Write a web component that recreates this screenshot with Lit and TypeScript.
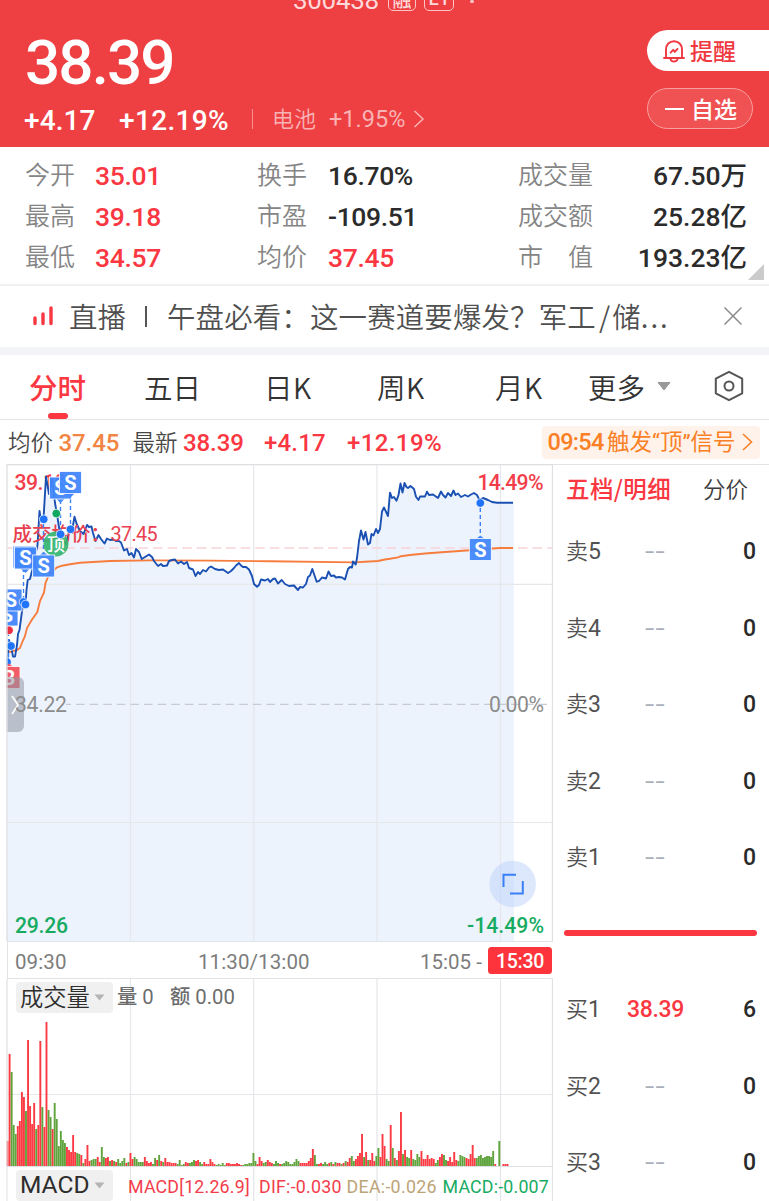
import { LitElement, html, svg, css } from "lit";
import { customElement, property } from "lit/decorators.js";
import { classMap } from "lit/directives/class-map.js";

const PRICE_POINTS =
  "7.5,662 9,640 11,646 13,656.6 15,656.6 17,645 18,634 19.5,630 22.7,606 25.5,604 26.5,590 27.7,580 30,579 32,571 35,556 37.5,545 39.5,511 41,521 43.5,519 46,476.5 49,494 52,479 55,503 57,514 60,534 63,540 66,544 70,529 72,531 74.5,516.7 76.7,524 80,531 83.5,534 87,525 89,527 91.5,526.5 93,533 95.5,541 98.5,535 101,539 104.5,543.5 107,538.5 110,540 113,539.5 116,541 119,541 121,542.5 124,550.5 127,549 129,555 131.5,553 134,557.5 136,549 139,552 141.7,559 145,557 149,554.5 152,557 154,561 158,566 161,564 163,566 167,565.5 169,561 172,560 175,559.5 178,563.5 181,561.5 184,564 187,562 189,568 193,569.5 195.5,576 198,572 200,574 203,570 206,571.5 209,567.5 211,566.5 215,569 219,570 223,569.5 228,573 231,571 234,568 236,565.5 239,563 241,565.5 243,567 246,567 249,569.5 252,576 254,584 257,586.8 259,585 261,579.5 265,580.5 268,579 270,582 273,579 275,578.5 278,583.5 281.7,580 285,584 289,586 294,585.5 298,590 300,587 303,587.5 306,584 308,577 310,575.5 312.3,569 316.7,581.7 319,581 322,577.5 326,578.5 328.5,571.5 331,576 334,575.5 336,577.5 339,577 342,577.5 345,579.5 348,569 350,567 352,567.5 353,561.5 355.7,564.5 357,558 359,541 361,530.5 363.5,539.5 365.5,532 368,544.5 370,543 371.5,534 373.5,535.5 376,529 378,533 380,529 382,511.5 384,507.5 388,516 390,492.7 392,498 394,497 396.5,500.7 398.5,495 400.5,483.5 402.5,492.5 404.5,483 406.5,487 408,488 410.5,486 414,489 416,496.7 418.5,500 420,496.5 425,496.5 427,491.7 429,495 433,494.5 438,498 441,491.5 443,495 445.5,497.5 448,493 451,496 453.5,490.5 455.5,495 458,493.5 461,497 465,495 468,496.5 471,494.5 474,493 477,495 479.5,500 483,498 488,500 492,502 497,502.7 513,502.7";

const AVERAGE_POINTS =
  "9,652 17,650 20,648 22.7,641 25,636 27,628 31.7,620 37.3,612 40,601 44,592.5 45.5,583 48,577 51,573 56.7,567.5 62,565.7 70,564.2 80,562.7 110,561 150,560.4 210,560.6 270,561.3 355,562.4 365,561.8 378,561 385,559.5 390,558.8 398,557.4 401,556.2 410,555 425,553.5 445,552 470,550.3 490,548.7 500,548 513,548";

const VOLUME_BARS =
  "r25 r112 g94 g41 g32 r40 r45 r74 r69 g55 r126 r60 r42 r63 g37 r41 r125 g59 r39 r144 g56 g49 r37 g63 g47 g20 g35 g26 g23 r19 r16 r14 r31 r14 g13 g12 r11 g3 r7 r21 r5 g6 g7 g7 r9 r4 g19 g9 r8 r9 g5 r6 g5 r4 g7 g3 g5 g8 r3 g4 r13 r7 g9 g7 g4 g4 g4 r9 r5 r3 r4 g2 g8 r6 g11 r5 g4 r8 r4 r4 r3 r3 r3 g2 g6 g1 g2 r4 r3 g3 g4 g6 r5 r6 g4 g2 r4 r2 r2 r7 r4 r2 g1 g2 g1 g3 g1 r3 r3 r2 r2 r2 r3 r2 r1 g1 g2 g2 g3 g3 g13 g5 r2 r9 r5 g3 g4 r6 r4 r3 g2 g5 g3 r2 g2 g3 g5 g4 g2 g2 g4 g7 g5 r3 r3 r3 r3 r5 r8 r17 g11 g2 r2 r3 g2 g4 g2 r3 g4 r2 g4 r3 r3 g2 r3 g5 r4 r8 g10 g5 r7 r10 r13 r32 g9 r14 g6 r6 r13 r5 g10 g18 r9 r32 r20 g7 g5 r41 g18 r8 g6 r15 r54 g12 r16 g9 g8 r16 g7 g6 g12 g9 r15 r7 r7 r11 r7 r8 r7 g3 g6 r9 r12 g11 g6 r5 r9 r4 r14 r6 g5 g11 g10 g9 r8 r7 r12 r21 r8 g8 g10 g11 g8 g9 g10 g10 g9 g15 r2 n0 g25 n0 r2 r2 r2"
    .split(" ")
    .map((t) => ({ tone: t[0], size: Number(t.slice(1)) }));

const DIGITS = css`Roboto, "Noto Sans CJK SC", sans-serif`;
const HANZI = css`"Noto Sans CJK SC", Roboto, sans-serif`;

@customElement("quote-header")
class QuoteHeader extends LitElement {
  static styles = css`
    :host { display: block; height: 147px; background: #ee4042; color: #fff; font-family: ${DIGITS}; overflow: hidden; }
    .title { display: flex; align-items: flex-end; height: 12px; padding-left: 293px; overflow: hidden; color: #ffd9d9; }
    .code { font-size: 26px; line-height: 26px; letter-spacing: -0.3px; width: 95px; height: 26px; font-weight: 450; margin-bottom: -1px; }
    .tag { box-sizing: border-box; height: 24px; border: 1.5px solid #fbc5c5; border-radius: 5px; font-size: 19px; line-height: 25px; text-align: center; margin-bottom: 1px; font-weight: 500; }
    .rz { width: 28px; margin-right: 8px; }
    .lf { width: 30px; line-height: 21px; }
    .more { width: 4px; height: 3px; border-radius: 2px; background: #fbc5c5; margin: 0 0 9px 16px; }
    .body { display: flex; justify-content: space-between; height: 135px; }
    .left { padding: 13px 0 0 25px; }
    .price { font-size: 62px; line-height: 75px; font-weight: 500; letter-spacing: -1.9px; }
    .change { display: flex; align-items: center; height: 40px; font-size: 28px; font-weight: 500; margin-left: -1px; }
    .amount { width: 95px; letter-spacing: 0.1px; }
    .percent { width: 133px; letter-spacing: 0.35px; }
    .sector { display: flex; align-items: center; color: #f9b3b4; font-size: 22px; font-weight: 350; border-left: 1.5px solid #f59091; height: 20px; padding-left: 19px; margin-top: -3px; }
    .sector span { width: 57px; margin-top: -3px; }
    .sector b { font-weight: 400; font-size: 23.5px; letter-spacing: 0; width: 84px; }
    .actions { display: flex; flex-direction: column; align-items: flex-start; width: 122px; padding-top: 18px; gap: 17px; font-family: ${HANZI}; font-size: 23px; line-height: 36px; font-weight: 500; }
    .remind { display: flex; align-items: center; box-sizing: border-box; width: 122px; height: 41px; background: #fff; color: #f03840; border-radius: 21px 0 0 21px; padding-left: 15px; gap: 4px; }
    .watch { display: flex; align-items: center; box-sizing: border-box; width: 106px; height: 41px; border: 1.2px solid #f8a0a1; border-radius: 21px; background: #f05153; padding-left: 17px; gap: 7px; }
    .actions span { margin-top: -2px; }
    .dash { width: 19px; height: 2px; background: #fff; }
  `;
  render() {
    return html`
      <div class="title"><span class="code">300438</span><span class="tag rz">融</span><span class="tag lf">L1</span><i class="more"></i></div>
      <div class="body">
        <div class="left">
          <div class="price">38.39</div>
          <div class="change">
            <span class="amount">+4.17</span><span class="percent">+12.19%</span>
            <div class="sector"><span>电池</span><b>+1.95%</b>
              <svg width="12" height="20" viewBox="0 0 12 20" fill="none" stroke="#f9b3b4" stroke-width="1.5"><path d="M1.5 2L10 10L1.5 18" /></svg>
            </div>
          </div>
        </div>
        <div class="actions">
          <div class="remind">
            <svg width="24" height="24" viewBox="0 0 24 24" fill="none" stroke="#f03840" stroke-width="1.9" stroke-linejoin="round" stroke-linecap="round">
              <path d="M2 19H22M4 19V10.5C4 5.5 7.5 2.2 12 2.2S20 5.5 20 10.5V19M8.5 20.2C9.5 23.3 14.5 23.3 15.500 20.200" />
              <path d="M8.600 13.600L11.200 10.800L12.800 12.800L15.500 10" />
            </svg><span>提醒</span>
          </div>
          <div class="watch"><i class="dash"></i><span>自选</span></div>
        </div>
      </div>`;
  }
}

@customElement("quote-stats")
class QuoteStats extends LitElement {
  static styles = css`
    :host { display: block; position: relative; box-sizing: border-box; height: 139px; padding: 7px 0 0 25px; border-bottom: 2px solid #f0f0f0; }
    .grid { display: grid; grid-template-columns: 70px 162px 71px 190px 100px 129px; grid-auto-rows: 41px; align-items: center; }
    .label { font: 350 25px/38px ${HANZI}; color: #858585; white-space: pre; padding-bottom: 3px; }
    .value { font: 500 26.5px/41px ${DIGITS}; color: #2b2b2b; letter-spacing: -0.35px; padding-top: 1px; }
    .up { color: #fb3742; }
    .end { text-align: right; letter-spacing: 0; }
    .corner { position: absolute; right: 5px; bottom: 4px; }
  `;
  rows = [
    ["今开", "35.01", "换手", "16.70%", "成交量", "67.50万"],
    ["最高", "39.18", "市盈", "-109.51", "成交额", "25.28亿"],
    ["最低", "34.57", "均价", "37.45", "市\u3000值", "193.23亿"],
  ];
  render() {
    return html`<div class="grid">
        ${this.rows.map((r, n) =>
          r.map((t, i) =>
            i % 2 === 0
              ? html`<span class="label">${t}</span>`
              : html`<span class=${classMap({ value: true, up: i === 1 || (i === 3 && n === 2), end: i === 5 })}>${t}</span>`
          )
        )}
      </div>
      <svg class="corner" width="16" height="16"><path d="M16 0V16H0Z" fill="#cbcbcb" /></svg>`;
  }
}

@customElement("live-ticker")
class LiveTicker extends LitElement {
  static styles = css`
    :host { display: flex; align-items: center; box-sizing: border-box; height: 69px; padding: 0 0 1px 32px; border-bottom: 8px solid #f2f4f8; font: 350 28.4px/58px ${HANZI}; color: #4f4f4f; white-space: nowrap; }
    .live { width: 76px; margin-left: 14px; }
    .bar { width: 2px; height: 21px; background: #555; margin-right: 20px; }
    .text { width: 557px; letter-spacing: 0.2px; }
    .slash { padding: 0 2px 0 3px; }
    .dots { letter-spacing: 2px; }
  `;
  render() {
    return html`
      <svg width="23" height="22" stroke="#fb3742" stroke-width="3.4" stroke-linecap="round"><path d="M3 13V18.500M11 9V18.500M19 3V18.500" /></svg>
      <span class="live">直播</span><i class="bar"></i>
      <span class="text">午盘必看：这一赛道要爆发？军工<span class="slash">/</span>储<span class="dots">...</span></span>
      <svg width="18" height="18" stroke="#8b8b8b" stroke-width="1.5"><path d="M0.500 0.500L17.500 17.500M17.500 0.500L0.500 17.500" /></svg>`;
  }
}

@customElement("period-tabs")
class PeriodTabs extends LitElement {
  static styles = css`
    :host { display: flex; box-sizing: border-box; height: 65px; border-bottom: 1.500px solid #e4e4e4; padding-left: 29px; font: 350 28.500px/63px ${HANZI}; color: #333; }
    .tab { display: flex; flex-direction: column; }
    .on { color: #fb3742; font-weight: 500; }
    .mark { width: 20px; height: 6px; border-radius: 3px; background: #fb3742; margin: -5px 0 0 19px; }
    .w0 { width: 115px; } .w1 { width: 120px; } .w2 { width: 113px; } .w3 { width: 118px; } .w4 { width: 93px; } .w5 { width: 69px; }
    .w2, .w3, .w4 { letter-spacing: 0.5px; }
    .tools { display: flex; align-items: center; gap: 43px; height: 62px; }
  `;
  render() {
    return html`
      ${["分时", "五日", "日K", "周K", "月K", "更多"].map(
        (t, i) => html`<div class="tab w${i} ${i === 0 ? "on" : ""}"><span>${t}</span>${i === 0 ? html`<i class="mark"></i>` : ""}</div>`
      )}
      <div class="tools">
        <svg width="14" height="9"><path d="M1 0.500H13L7 8Z" fill="#999" stroke="#999" stroke-linejoin="round" /></svg>
        <svg width="30" height="32" viewBox="0 0 30 32" fill="none" stroke="#555" stroke-width="2" stroke-linejoin="round">
          <path d="M15 1.800L28.200 8.700V23.300L15 30.200L1.800 23.300V8.700Z" /><circle cx="15" cy="16" r="4.500" />
        </svg>
      </div>`;
  }
}

@customElement("quote-summary")
class QuoteSummary extends LitElement {
  static styles = css`
    :host { display: flex; align-items: center; height: 44px; padding-left: 8px; font: 500 24px/42px ${DIGITS}; letter-spacing: -0.1px; color: #fb3742; white-space: nowrap; }
    :host > span { padding-top: 2px; }
    :host > .label { font: 350 22.500px/40px ${HANZI}; letter-spacing: 0; color: #484848; width: 50.5px; padding: 0 0 3px; }
    .avg { color: #f08544; width: 74px; }
    .last { width: 81px; }
    .diff { width: 83px; letter-spacing: 0.2px; }
    .pct { width: 194.5px; letter-spacing: 0.400px; }
    .signal { display: flex; align-items: center; box-sizing: border-box; height: 33px; width: 218px; background: #fef2ea; border-radius: 4px; padding: 0 7px 0 6px; color: #fa7f25; font: 400 22.5px/33px ${DIGITS}; justify-content: space-between; }
    .time { font: 500 23.5px/33px ${DIGITS}; letter-spacing: -0.700px; width: 58px; }
    .word { letter-spacing: 0; width: 133px; }
  `;
  render() {
    return html`<span class="label">均价</span><span class="avg">37.45</span>
      <span class="label">最新</span><span class="last">38.39</span><span class="diff">+4.17</span><span class="pct">+12.19%</span>
      <div class="signal"><span class="time">09:54</span><span class="word">触发“顶”信号</span>
        <svg width="11" height="18" fill="none" stroke="#fa7f25" stroke-width="1.600"><path d="M1 1L9.500 9L1 17" /></svg></div>`;
  }
}

@customElement("price-chart")
class PriceChart extends LitElement {
  static styles = css`
    :host { display: block; height: 477px; }
    svg { display: block; }
    text { font-family: ${DIGITS}; }
    .axis { font-size: 21.200px; font-weight: 500; }
    .mean { font-size: 19.800px; font-weight: 450; fill: #e8404f; }
    .mean.zh { font-weight: 500; font-size: 19.500px; }
    .up { fill: #f23d4b; }
    .down { fill: #17ab62; }
    .flat { fill: #8c8c8c; font-weight: 450; }
    .badge { font: 700 20px ${DIGITS}; fill: #fff; text-anchor: middle; }
    .top { font: 500 18px ${HANZI}; fill: #fff; text-anchor: middle; }
    .grid { stroke: #e6e7eb; stroke-width: 1.200; fill: none; }
    .link { stroke: #3c80f6; stroke-width: 1.400; stroke-dasharray: 4 3; }
    .box { stroke: #fff; stroke-width: 0.800; fill-opacity: 0.94; }
  `;
  private tag(x: number, y: number, dir: "up" | "down", letter = "S", fill = "#4186fb") {
    const tip = dir === "down" ? `M${x - 5} ${y + 10}L${x} ${y + 15}L${x + 5} ${y + 10}` : `M${x - 5} ${y - 10}L${x} ${y - 14}L${x + 5} ${y - 10}`;
    return svg`<path d=${tip} fill=${fill} /><rect class="box" x=${x - 11} y=${y - 11} width="22" height="22" fill=${fill} /><text class="badge" x=${x} y=${y + 7}>${letter}</text>`;
  }
  private dot(x: number, y: number, fill = "#1f74fa") {
    return svg`<circle cx=${x} cy=${y} r="4.300" fill=${fill} stroke="#fff" stroke-width="0.700" />`;
  }
  render() {
    return html`<svg width="553" height="477" viewBox="0 464 553 477">
      <defs><clipPath id="plot"><rect x="6.500" y="464" width="546" height="477" /></clipPath></defs>
      <g clip-path="url(#plot)">
        <polygon points="7,941 ${PRICE_POINTS} 513.800,502.700 513.800,941" fill="#ecf3fd" />
        <path class="grid" d="M130.500 464V941M253.700 464V941M377 464V941M500.500 464V941M7 584.300H552M7 822.500H552" />
        <path d="M7 548H552" stroke="#f8d3d8" stroke-width="1.600" stroke-dasharray="9.600 5" />
        <path d="M66 704.300H552" stroke="#c6cbd6" stroke-width="1.300" stroke-dasharray="8.600 5" stroke-dashoffset="-10" />
        <text class="axis up" x="14.500" y="490" textLength="52">39.18</text>
        <polyline points=${AVERAGE_POINTS} fill="none" stroke="#f77d3e" stroke-width="1.900" />
        <polyline points=${PRICE_POINTS} fill="none" stroke="#1b50b3" stroke-width="1.900" stroke-linejoin="round" />
        <text class="mean zh" x="12.500" y="540.500">成交均价：</text>
        <text class="mean" x="110.500" y="540.500" textLength="47">37.45</text>
        <path class="link" d="M60.500 500V530M70.500 492V524M23.500 568V602M43.500 524V556M480.300 508V536M8.500 632V668" />
        <circle cx="56" cy="544" r="12.500" fill="#34b56f" fill-opacity="0.920" />
        <text class="top" x="56" y="551">顶</text>
        ${this.tag(60.500, 488, "down")}${this.tag(70.500, 482.500, "down")}
        ${this.tag(24, 557, "down")}${this.tag(25.500, 558, "down")}${this.tag(43.700, 566, "up")}
        ${this.tag(7, 615, "down")}${this.tag(11, 600, "down")}
        ${this.tag(480.300, 549.500, "up")}
        ${this.dot(43.700, 519.300)}${this.dot(56.300, 513.500, "#10a861")}${this.dot(60.500, 534.300)}${this.dot(70.500, 529.300)}
        ${this.dot(23.500, 602)}${this.dot(25.500, 604.500)}${this.dot(9, 630.300, "#ea2f42")}${this.dot(11, 646)}${this.dot(7, 662)}
        ${this.dot(480.300, 503)}
        ${this.tag(9, 677.500, "up", "B", "#f2525f")}
        <rect x="0" y="677" width="24" height="55" rx="6" fill="#8f96a3" fill-opacity="0.550" />
        <path d="M12 696L18 705L12 714" fill="none" stroke="#fff" stroke-width="1.600" />
        <text class="axis up" x="477.500" y="490" textLength="66">14.49%</text>
        <text class="axis flat" x="15" y="712" textLength="52">34.22</text>
        <text class="axis flat" x="489" y="712" textLength="55">0.00%</text>
        <text class="axis down" x="15" y="933" textLength="53">29.26</text>
        <text class="axis down" x="467" y="933" textLength="77">-14.49%</text>
        <circle cx="512.700" cy="884" r="23.300" fill="#b9cefa" fill-opacity="0.480" />
        <path d="M503.500 887V874.800H516M510 893.600H522.800V881" fill="none" stroke="#397ff5" stroke-width="2" />
      </g>
      <path d="M7 941V464.700H769M552.500 464V941" fill="none" stroke="#dddfe2" stroke-width="1.300" />
    </svg>`;
  }
}

@customElement("time-axis")
class TimeAxis extends LitElement {
  static styles = css`
    :host { display: flex; box-sizing: border-box; align-items: center; height: 38px; margin-left: 6.500px; border: solid #e2e3e6; border-width: 1.300px 0 1.300px 1.300px; width: 546px; font: 400 20.500px/34px ${DIGITS}; color: #7c7c7c; padding-left: 7.500px; letter-spacing: 0.100px; white-space: nowrap; }
    span { padding-top: 3px; }
    .open { width: 183px; }
    .noon { width: 222px; }
    .close { width: 68px; letter-spacing: 0; }
    .now { background: #fd343b; color: #fff; font-weight: 500; font-size: 19.500px; border-radius: 3.500px; width: 64px; box-sizing: border-box; height: 27px; line-height: 25px; padding-top: 2.500px; text-align: center; letter-spacing: -0.300px; }
  `;
  render() {
    return html`<span class="open">09:30</span><span class="noon">11:30/13:00</span><span class="close">15:05 -</span><span class="now">15:30</span>`;
  }
}

@customElement("indicator-picker")
class IndicatorPicker extends LitElement {
  @property() label = "";
  static styles = css`
    :host { display: flex; box-sizing: border-box; align-items: center; justify-content: space-between; width: 97px; height: 31px; background: #f0f0f0; border-radius: 4px; padding: 0 8px 0 4px; font: 350 23.300px/29px ${HANZI}; color: #2d2d2d; flex: none; }
    :host([latin]) { font: 400 24.500px/30px Roboto, sans-serif; letter-spacing: 0; }
    span { padding-bottom: 2px; }
  `;
  render() {
    return html`<span>${this.label}</span><svg width="11" height="7"><path d="M0.500 0.500H10.500L5.500 6.500Z" fill="#b4b4b4" /></svg>`;
  }
}

@customElement("volume-chart")
class VolumeChart extends LitElement {
  static styles = css`
    :host { display: grid; height: 188px; }
    svg, .legend { grid-area: 1 / 1; }
    svg { display: block; }
    .legend { display: flex; align-items: center; height: 31px; margin: 3px 0 0 16px; font: 450 20.300px/31px ${DIGITS}; color: #6c6c6c; white-space: pre; z-index: 1; }
    .qty { margin-left: 4px; width: 53px; letter-spacing: 0; }
    .sum { letter-spacing: 0; }
  `;
  render() {
    return html`<svg width="553" height="188" viewBox="0 979 553 188">
        <path d="M130.500 979V1167M253.700 979V1167M377 979V1167M500.500 979V1167M7 1094.500H552" stroke="#e6e7eb" stroke-width="1.200" />
        ${VOLUME_BARS.map((b, i) => svg`<rect x=${(6.6 + i * 2.049).toFixed(2)} y=${1166 - b.size} width="1.900" height=${b.size} fill=${b.tone === "r" ? "#fb3a43" : "#5fa33c"} />`)}
        <path d="M7 979V1167M552.500 979V1167M7 1166.500H552" stroke="#dfe0e3" stroke-width="1.200" />
      </svg>
      <div class="legend"><indicator-picker label="成交量"></indicator-picker><span class="qty">量 0</span><span class="sum">额 0.00</span></div>`;
  }
}

@customElement("macd-row")
class MacdRow extends LitElement {
  static styles = css`
    :host { display: grid; height: 34px; }
    svg, .legend { grid-area: 1 / 1; }
    .legend { display: flex; align-items: center; height: 31px; margin: 3px 0 0 16px; font: 450 17.800px/31px ${DIGITS}; color: #f23d4b; white-space: nowrap; z-index: 1; }
    .legend span { padding-top: 2px; }
    .name { margin-left: 15px; width: 131px; }
    .dif { width: 87.500px; letter-spacing: 0.250px; }
    .dea { width: 96px; color: #bda477; letter-spacing: 0.300px; }
    .macd { color: #17ab62; }
    .name, .macd { letter-spacing: 0.200px; }
  `;
  render() {
    return html`<svg width="553" height="34"><path d="M7 0V34M130.500 0V34M253.700 0V34M377 0V34M500.500 0V34M552.500 0V34" stroke="#e3e4e8" stroke-width="1.200" /></svg>
      <div class="legend"><indicator-picker latin label="MACD"></indicator-picker>
        <span class="name">MACD[12.26.9]</span><span class="dif">DIF:-0.030</span><span class="dea">DEA:-0.026</span><span class="macd">MACD:-0.007</span></div>`;
  }
}

@customElement("order-book")
class OrderBook extends LitElement {
  static styles = css`
    :host { display: block; box-sizing: border-box; border-top: 1.300px solid #e2e3e6; height: 737px; padding: 0 13px 0 13px; overflow: hidden; font: 500 23px/75px ${DIGITS}; color: #2a2a2a; }
    .tabs { display: flex; box-sizing: border-box; height: 48px; font: 500 23.500px/46px ${HANZI}; color: #fb3742; }
    .tabs .first { width: 137px; letter-spacing: 0.400px; }
    .tabs .second { font-weight: 350; color: #3d3d3d; font-size: 22.500px; }
    .row { display: grid; grid-template-columns: 43px 92px 1fr; height: 76.400px; align-items: center; }
    .row > span { padding-top: 1.400px; }
    .label { font: 350 22px/75px ${DIGITS}; color: #525252; }
    .label b { font-weight: 400; font-size: 23px; }
    .price { text-align: center; color: #a9afba; font-weight: 400; }
    .price i { display: inline-block; transform: scaleX(1.450); font-style: normal; letter-spacing: 1px; padding-left: 1px; }
    .price.up { color: #fb3742; font-weight: 500; letter-spacing: -0.100px; }
    .price.up i { transform: none; letter-spacing: -0.300px; }
    .size { text-align: right; }
    .sep { height: 6px; border-radius: 3px; background: #fb3742; margin: 35px -1px 35px -2px; }
  `;
  private row(side: string, level: number, price = "--", size = "0") {
    return html`<div class="row"><span class="label">${side}<b>${level}</b></span><span class="price ${price === "--" ? "" : "up"}"><i>${price}</i></span><span class="size">${size}</span></div>`;
  }
  render() {
    return html`<div class="tabs"><span class="first">五档/明细</span><span class="second">分价</span></div>
      ${[5, 4, 3, 2, 1].map((n) => this.row("卖", n))}
      <div class="sep"></div>
      ${this.row("买", 1, "38.39", "6")}${this.row("买", 2)}${this.row("买", 3)}`;
  }
}

@customElement("app-root")
class AppRoot extends LitElement {
  static styles = css`
    :host { display: block; width: 769px; height: 1201px; background: #fff; overflow: hidden; }
    .main { display: grid; grid-template-columns: 553px 216px; }
  `;
  render() {
    return html`<quote-header></quote-header><quote-stats></quote-stats><live-ticker></live-ticker>
      <period-tabs></period-tabs><quote-summary></quote-summary>
      <div class="main">
        <div><price-chart></price-chart><time-axis></time-axis><volume-chart></volume-chart><macd-row></macd-row></div>
        <order-book></order-book>
      </div>`;
  }
}
